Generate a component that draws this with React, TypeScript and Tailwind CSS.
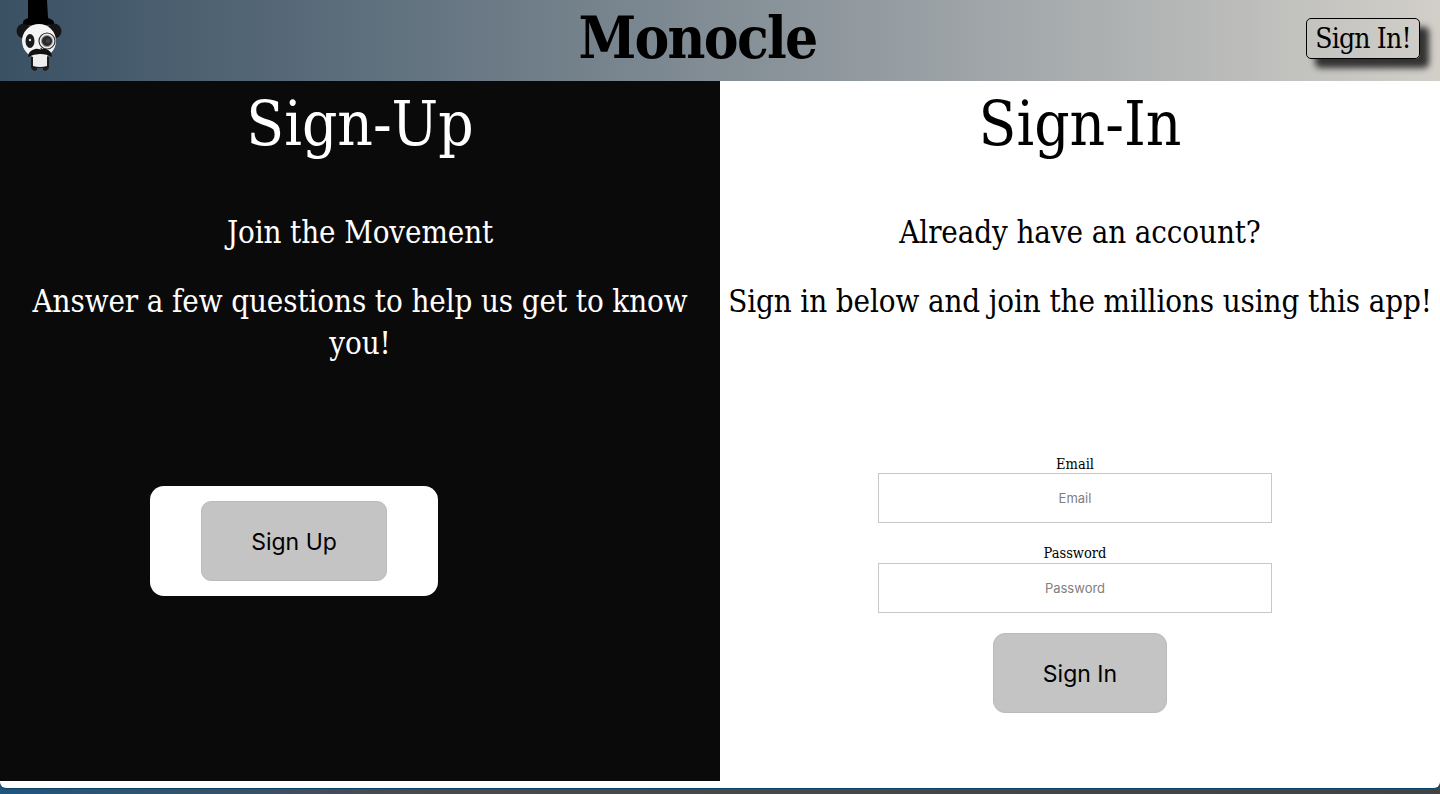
import React from "react";

const Panda: React.FC = () => (
  <svg width="46" height="74" viewBox="0 0 46 74" className="mb-[7px] block">
    {/* ears */}
    <circle cx="8" cy="31" r="7.5" fill="#141414" />
    <circle cx="38" cy="31" r="7.5" fill="#141414" />
    {/* hat */}
    <path d="M12 0 H31 L32 18 Q39 20 38 24 Q23 27 7 24 Q6 20 12 18 Z" fill="#000" />
    {/* head */}
    <ellipse cx="23" cy="41" rx="17" ry="17" fill="#f4f4f4" />
    <ellipse cx="14" cy="41" rx="4.5" ry="7" fill="#1a1a1a" />
    <circle cx="14" cy="40" r="1.2" fill="#ddd" />
    <circle cx="31" cy="41" r="8" fill="#eee" stroke="#333" strokeWidth="1.2" />
    <circle cx="31" cy="41" r="5.5" fill="#2a2a2a" stroke="#999" strokeWidth="1" />
    <circle cx="32" cy="41" r="2" fill="#444" />
    <path d="M26 48 L23 50" stroke="#333" strokeWidth="1" />
    {/* body */}
    <path d="M15 57 L15 68 L18 71 L21 70 V68 H27 V70 L30 71 L33 68 V57 Z" fill="#1c1c1c" />
    <path d="M17 55 H31 V66 Q24 68 17 66 Z" fill="#eee" />
    {/* moustache */}
    <path d="M12 57 Q12 51 19 49 Q22 48 24 50 Q26 48 30 49 Q36 51 36 57 Q31 54 24 54 Q18 54 12 57 Z" fill="#111" />
  </svg>
);

const serif = "font-['DejaVu_Serif_Condensed','DejaVu_Serif',serif]";

export default function App() {
  return (
    <div className={`h-[794px] w-[1440px] overflow-hidden bg-gradient-to-r from-[#1f5580] via-[#4a4a4c] via-30% to-[#3f4447] ${serif}`}>
      <div className="h-[788px] rounded-b-[6px] bg-white shadow-[0_1px_0_#0b4468]">
        <header className="flex h-[81px] items-center justify-between bg-gradient-to-r from-[#3a5164] to-[#d2cfc9] pl-[16px] pr-[20px]">
          <Panda />
          <h1 className="mb-[6px] ml-[27px] text-[58px] font-bold leading-[74px] tracking-[-1.7px] text-black">Monocle</h1>
          <button className="mb-[4px] h-[41px] w-[114px] rounded-[5px] border border-black text-[28px] leading-none tracking-[-0.8px] text-black shadow-[9px_9px_6px_#333]">
            Sign In!
          </button>
        </header>
        <main className="grid h-[700px] grid-cols-2">
          <section className="bg-[#0a0a0a] text-center text-white">
            <h2 className="pt-[3px] text-[61.5px] leading-[80px]">Sign-Up</h2>
            <p className="mt-[47px] text-[31px] leading-[42px] tracking-[-0.1px]">Join the Movement</p>
            <p className="mt-[27px] px-[10px] text-[31px] leading-[42px] tracking-[-0.1px]">Answer a few questions to help us get to know you!</p>
            <div className="ml-[150px] mt-[122px] flex h-[110px] w-[288px] items-center justify-center rounded-[14px] bg-white">
              <button className="h-[80px] w-[186px] rounded-[10px] border border-[#bbb] bg-[#c4c4c4] pt-[2px] font-['Inter',sans-serif] text-[23px] text-black">
                Sign Up
              </button>
            </div>
          </section>
          <section className="flex flex-col items-center bg-white text-center text-black">
            <h2 className="pt-[3px] text-[61.5px] leading-[80px]">Sign-In</h2>
            <p className="mt-[47px] text-[31px] leading-[42px] tracking-[-0.1px]">Already have an account?</p>
            <p className="mt-[27px] whitespace-nowrap text-[31px] leading-[42px] tracking-[-0.1px]">Sign in below and join the millions using this app!</p>
            <form className="mt-[133px] flex w-full flex-col items-center">
              <label className="ml-[-10px] flex w-[394px] flex-col text-[14.5px] leading-[18px]">
                Email
                <input
                  placeholder="Email"
                  className="h-[50px] border border-[#c8c8c8] bg-white text-center font-['Inter',sans-serif] text-[13px] placeholder:text-[#808080]"
                />
              </label>
              <label className="ml-[-10px] mt-[21px] flex w-[394px] flex-col text-[14.5px] leading-[19px]">
                Password
                <input
                  placeholder="Password"
                  className="h-[50px] border border-[#c8c8c8] bg-white text-center font-['Inter',sans-serif] text-[13px] placeholder:text-[#808080]"
                />
              </label>
              <button type="button" className="mt-[20px] h-[80px] w-[174px] rounded-[12px] border border-[#bbb] bg-[#c4c4c4] pt-[2px] font-['Inter',sans-serif] text-[23px] text-black">
                Sign In
              </button>
            </form>
          </section>
        </main>
      </div>
    </div>
  );
}
